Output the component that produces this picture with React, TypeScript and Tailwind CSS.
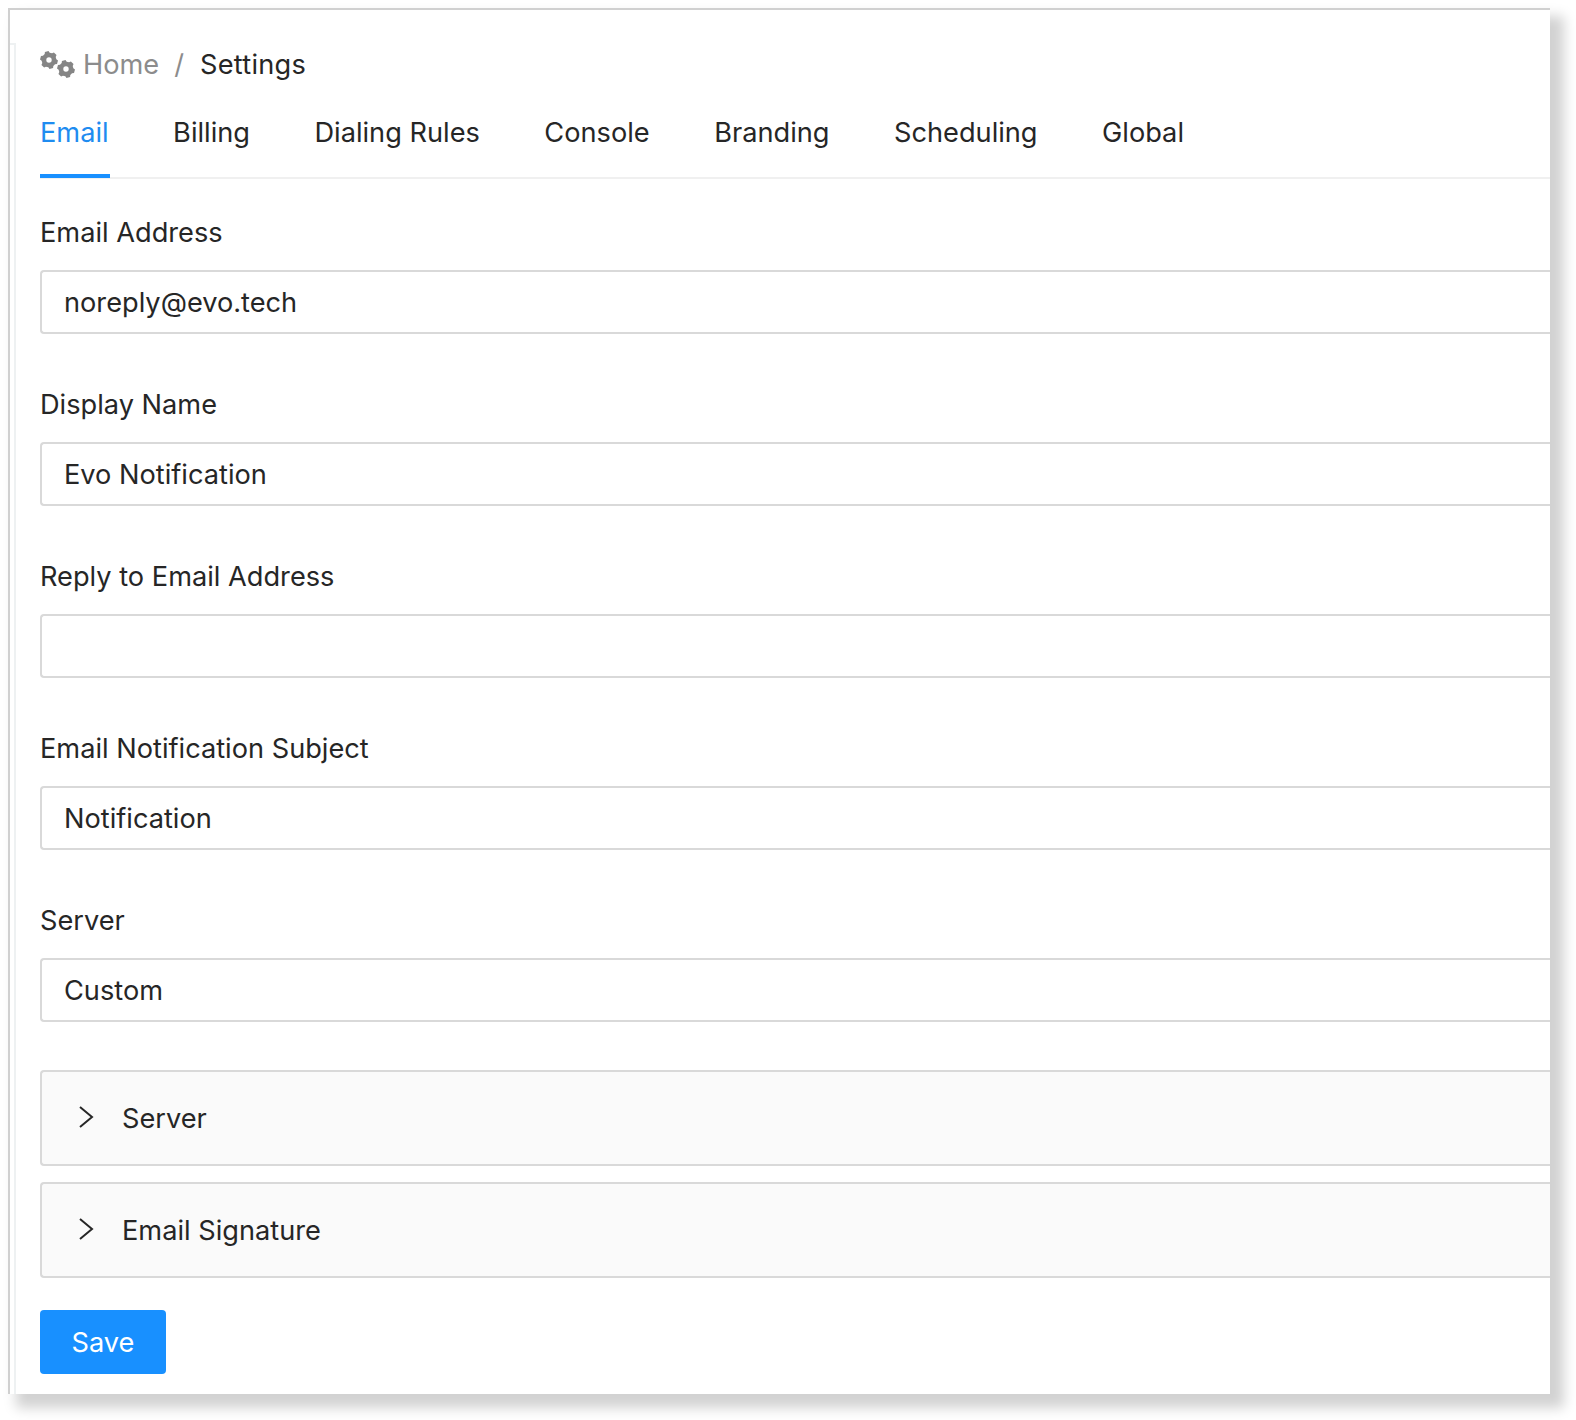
const font = { fontFamily: '"Inter", "Liberation Sans", sans-serif' };

function gear(cx: number, cy: number, r: number, hole: number) {
  const teeth = 6;
  const pts: string[] = [];
  const ri = r * 0.82;
  for (let i = 0; i < teeth; i++) {
    const a = (i / teeth) * Math.PI * 2 + 0.26;
    const s = (Math.PI * 2) / teeth;
    const seq: [number, number][] = [
      [ri, a - s * 0.34],
      [r, a - s * 0.2],
      [r, a + s * 0.2],
      [ri, a + s * 0.34],
    ];
    seq.forEach(([rad, ang]) => {
      pts.push(`${(cx + rad * Math.cos(ang)).toFixed(2)} ${(cy + rad * Math.sin(ang)).toFixed(2)}`);
    });
  }
  return `M${pts.join("L")}Z M${cx + hole} ${cy}a${hole} ${hole} 0 1 0 ${-2 * hole} 0a${hole} ${hole} 0 1 0 ${2 * hole} 0Z`;
}

function Gears() {
  return (
    <svg width="36" height="28" viewBox="0 0 36 28" className="shrink-0">
      <path d={gear(9, 9, 9, 2.7)} fill="#858585" fillRule="evenodd" />
      <path d={gear(26, 18, 9, 2.7)} fill="#858585" fillRule="evenodd" />
    </svg>
  );
}

function Chevron() {
  return (
    <svg width="16" height="22" viewBox="0 0 16 22" fill="none" className="shrink-0 -mt-[2px]">
      <path d="M2 1 L14 11 L2 21" stroke="#262626" strokeWidth="2" />
    </svg>
  );
}

function Field({ label, value }: { label: string; value: string }) {
  return (
    <div className="flex flex-col mb-[54px]">
      <div className="h-[34px] leading-[34px] text-[27.2px] text-[#262626] mb-[20px]">{label}</div>
      <div className="h-[64px] flex items-center pl-[22px] pt-[2px] border-2 border-r-0 border-[#d9d9d9] rounded-l-[4px] text-[27.2px] text-[#262626] bg-white">
        {value}
      </div>
    </div>
  );
}

function Collapse({ label }: { label: string }) {
  return (
    <div className="h-[96px] flex items-center pl-[36px] border-2 border-r-0 border-[#d9d9d9] rounded-l-[4px] bg-[#fafafa] text-[27.2px] text-[#262626] mb-[16px]">
      <Chevron />
      <span className="ml-[28px] pt-[2px]">{label}</span>
    </div>
  );
}

const tabs = ["Email", "Billing", "Dialing Rules", "Console", "Branding", "Scheduling", "Global"];

export default function App() {
  return (
    <div className="w-[1576px] h-[1420px] bg-white pt-[8px] pl-[8px]" style={font}>
      <div className="w-[1542px] h-[1386px] bg-white border-t-2 border-l-2 border-[#d0d0d0] shadow-[11px_11px_12px_3px_rgba(0,0,0,0.18)] flex">
        <div className="w-[6px] mt-[33px] shrink-0 border-t-2 border-r-2 border-[#eef1f2]" />
        <div className="flex-1 min-w-0 pt-[31px] pl-[24px] flex flex-col">
          <div className="h-[44px] flex items-center text-[27.2px] mt-[2px]">
            <Gears />
            <span className="text-[#8c8c8c] ml-[7px]">Home</span>
            <span className="text-[#8c8c8c] ml-[15px]">/</span>
            <span className="text-[#262626] ml-[16px] tracking-[0.25px]">Settings</span>
          </div>
          <div className="flex gap-[64.5px] border-b-2 border-[#f0f0f0] h-[91px] mt-[1px] pt-[23px] mb-[37px]">
            {tabs.map((t, i) => (
              <div
                key={t}
                className={
                  i === 0
                    ? "h-[67px] leading-[44px] pr-[1px] -mr-[1px] text-[27.2px] text-[#1f8cf0] border-b-4 border-[#1890ff]"
                    : "h-[67px] leading-[44px] text-[27.2px] text-[#262626]"
                }
              >
                {t}
              </div>
            ))}
          </div>
          <Field label="Email Address" value="noreply@evo.tech" />
          <Field label="Display Name" value="Evo Notification" />
          <Field label="Reply to Email Address" value="" />
          <Field label="Email Notification Subject" value="Notification" />
          <Field label="Server" value="Custom" />
          <div className="-mt-[6px]">
            <Collapse label="Server" />
            <Collapse label="Email Signature" />
          </div>
          <button className="mt-[16px] w-[126px] h-[64px] pt-[2px] rounded-[4px] bg-[#1890ff] text-white text-[27.2px]">Save</button>
        </div>
      </div>
    </div>
  );
}
